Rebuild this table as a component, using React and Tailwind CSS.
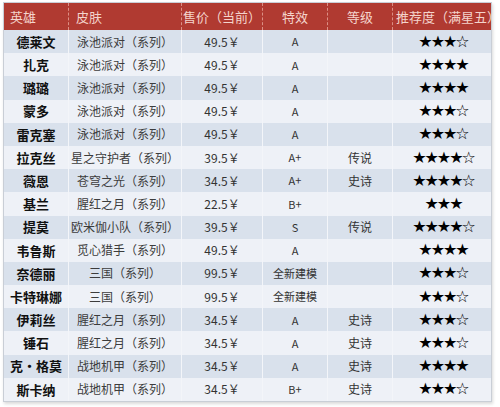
const rows = [
  ["德莱文", "泳池派对（系列）", "49.5￥", "A", "", "★★★☆"],
  ["扎克", "泳池派对（系列）", "49.5￥", "A", "", "★★★★"],
  ["璐璐", "泳池派对（系列）", "49.5￥", "A", "", "★★★★"],
  ["蒙多", "泳池派对（系列）", "49.5￥", "A", "", "★★★☆"],
  ["雷克塞", "泳池派对（系列）", "49.5￥", "A", "", "★★★☆"],
  ["拉克丝", "星之守护者（系列）", "39.5￥", "A+", "传说", "★★★★☆"],
  ["薇恩", "苍穹之光（系列）", "34.5￥", "A+", "史诗", "★★★★☆"],
  ["基兰", "腥红之月（系列）", "22.5￥", "B+", "", "★★★"],
  ["提莫", "欧米伽小队（系列）", "39.5￥", "S", "传说", "★★★★☆"],
  ["韦鲁斯", "觅心猎手（系列）", "49.5￥", "A", "", "★★★★"],
  ["奈德丽", "三国（系列）", "99.5￥", "全新建模", "", "★★★☆"],
  ["卡特琳娜", "三国（系列）", "99.5￥", "全新建模", "", "★★★☆"],
  ["伊莉丝", "腥红之月（系列）", "34.5￥", "A", "史诗", "★★★☆"],
  ["锤石", "腥红之月（系列）", "34.5￥", "A", "史诗", "★★★☆"],
  ["克·格莫", "战地机甲（系列）", "34.5￥", "A", "史诗", "★★★★"],
  ["斯卡纳", "战地机甲（系列）", "34.5￥", "B+", "史诗", "★★★☆"],
];

const cols = "grid grid-cols-[65px_113px_81px_65px_65px_100px]";

export default function App() {
  return (
    <div
      className="w-[500px] h-[407px] bg-white pl-[3px] pt-[2px]"
      style={{ fontFamily: '"Noto Sans CJK SC", "Noto Sans", sans-serif' }}
    >
      <div className="w-[489px] border border-[#c9ced6] shadow-[1px_2px_3px_rgba(0,0,0,0.15)]">
        <div className={`${cols} h-[27px] bg-[#b03a31] text-[#f4d4cc] text-[13px]`}>
          <div className="flex items-center pl-[6px] border-r border-dashed border-[#dc8f85]">英雄</div>
          <div className="flex items-center pl-[7px] border-r border-dashed border-[#dc8f85]">皮肤</div>
          <div className="flex items-center justify-center border-r border-dashed border-[#dc8f85] whitespace-nowrap">售价（当前）</div>
          <div className="flex items-center justify-center border-r border-dashed border-[#dc8f85]">特效</div>
          <div className="flex items-center justify-center border-r border-dashed border-[#dc8f85]">等级</div>
          <div className="flex items-center pl-[3px] whitespace-nowrap">推荐度（满星五）</div>
        </div>
        {rows.map((r, i) => (
          <div
            key={i}
            className={`${cols} h-[23.2px] ${i % 2 === 0 ? "bg-[#d9e1ec]" : "bg-[#eef1f7]"}`}
          >
            <div className="flex items-center justify-center border-r border-[#f3f5f9] text-[13px] font-bold text-[#111] whitespace-nowrap">
              {r[0]}
            </div>
            <div className="flex items-center justify-center border-r border-[#f3f5f9] text-[12px] text-[#3c3c3c] whitespace-nowrap">
              {r[1]}
            </div>
            <div className="flex items-center justify-center border-r border-[#f3f5f9] text-[12px] text-[#333]">
              {r[2]}
            </div>
            <div className="flex items-center justify-center border-r border-[#f3f5f9] text-[11px] text-[#333] whitespace-nowrap">
              {r[3]}
            </div>
            <div className="flex items-center justify-center border-r border-[#f3f5f9] text-[12px] text-[#333]">
              {r[4]}
            </div>
            <div
              className="flex items-center justify-center text-[16px] tracking-[-2px] text-black leading-none"
              style={{ fontFamily: '"DejaVu Sans", sans-serif' }}
            >
              {r[5]}
            </div>
          </div>
        ))}
      </div>
    </div>
  );
}
